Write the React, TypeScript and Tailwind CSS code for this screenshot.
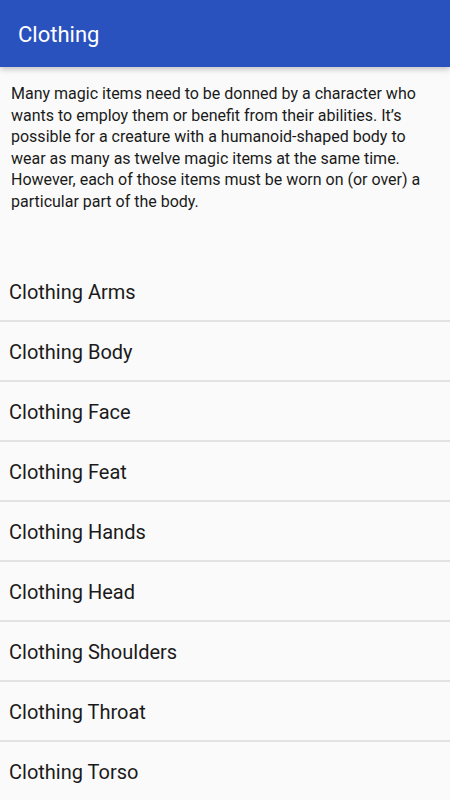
import React from "react";

const items = [
  "Clothing Arms",
  "Clothing Body",
  "Clothing Face",
  "Clothing Feat",
  "Clothing Hands",
  "Clothing Head",
  "Clothing Shoulders",
  "Clothing Throat",
  "Clothing Torso",
];

export default function App() {
  return (
    <div
      className="w-[450px] h-[800px] overflow-hidden bg-[#fafafa] flex flex-col"
      style={{ fontFamily: "Roboto, 'Noto Sans', sans-serif" }}
    >
      <div className="h-[67px] shrink-0 bg-[#2a52be] flex items-center pl-[18px] pt-[2px] shadow-[0_2px_6px_rgba(0,0,0,0.25)] relative z-10">
        <span className="text-white text-[22px]">Clothing</span>
      </div>
      <p className="px-[11px] pt-[16px] text-[16px] leading-[21.5px] text-[#1a1a1a]">
        Many magic items need to be donned by a character who wants to employ them or benefit from their abilities. It’s possible for a creature with a humanoid-shaped body to wear as many as twelve magic items at the same time. However, each of those items must be worn on (or over) a particular part of the body.
      </p>
      <div className="mt-[50px] flex flex-col">
        {items.map((t) => (
          <div
            key={t}
            className="h-[60px] shrink-0 flex items-center pl-[9px] pt-[2px] border-b-2 border-[#e2e2e2] text-[20px] text-[#1a1a1a]"
          >
            {t}
          </div>
        ))}
      </div>
    </div>
  );
}
